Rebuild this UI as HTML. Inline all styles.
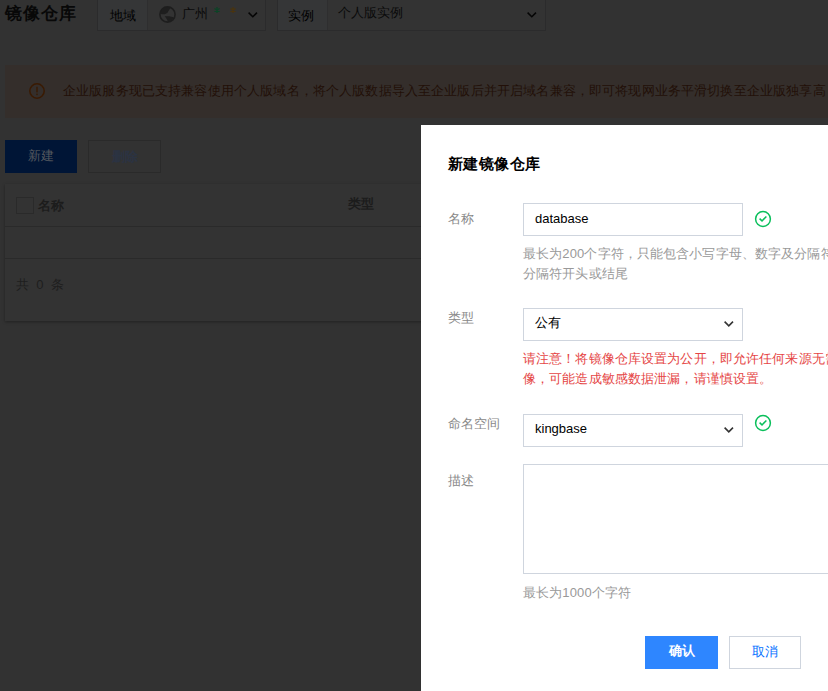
<!DOCTYPE html>
<html><head><meta charset="utf-8">
<style>
*{box-sizing:border-box;margin:0;padding:0}
html,body{width:828px;height:691px;overflow:hidden}
body{position:relative;background:#323232;font-family:"Liberation Sans",sans-serif;font-size:12px;color:#000}
.abs{position:absolute}
.nw{white-space:nowrap}
svg{position:absolute;overflow:visible}
/* page (dimmed) */
.title{left:5px;top:1.5px;font-size:17px;letter-spacing:1px;font-weight:bold;line-height:24px;color:#080808}
.filter{top:-2px;height:33px;border:1px solid #2b2b2c;background:#333333}
.filter .lab{position:absolute;left:0;top:0;bottom:0;width:50px;background:#353637;border-right:1px solid #2e2e2f;font-size:13px;line-height:34px;text-align:center;color:#000}
.banner{left:5px;top:65px;width:900px;height:53px;background:#342e2b}
.banner .txt{position:absolute;left:58px;top:17px;font-size:13px;letter-spacing:0.15px;line-height:18px;color:#221008}
.btn{top:140px;height:33px;width:72px;font-size:13px;line-height:31px;text-align:center}
.card{left:5px;top:184px;width:900px;height:137px;background:#333333;box-shadow:0 1px 3px rgba(0,0,0,.35)}
/* drawer */
.drawer{left:421px;top:125px;width:600px;height:700px;background:#fff}
.dtitle{left:448px;top:154px;letter-spacing:0.4px;font-size:15px;font-weight:bold;line-height:20px;color:#000}
.lbl{left:448px;font-size:13px;line-height:18px;color:#888}
.inp{left:523px;width:220px;height:33px;border:1px solid #cfd5de;background:#fff;font-size:13px;line-height:28px;padding-left:11px;color:#000}
.help{left:523px;font-size:13px;letter-spacing:0.12px;line-height:20px;color:#999}
.red{color:#e54545}
.btn2{height:33px;width:72px;font-size:13px;line-height:29px;text-align:center}
</style></head><body>

<div class="abs title nw">镜像仓库</div>

<div class="abs filter" style="left:97px;width:169px">
  <div class="lab">地域</div>
  <svg style="left:61px;top:7px" width="17" height="17" viewBox="0 0 17 17">
    <circle cx="8.5" cy="8.5" r="7.6" fill="none" stroke="#1e1e1e" stroke-width="1.6"/>
    <path d="M1.2 8 A7.4 7.4 0 0 1 11.5 1.7 L9.5 5 L8.3 7 L5.6 8.3 L3.5 8.2 Z" fill="#1e1e1e"/>
    <path d="M5.8 10.2 L10.2 10.2 L14.8 11.3 A7.4 7.4 0 0 1 9 15.9 L8 13.5 Z" fill="#1e1e1e"/>
  </svg>
  <div class="abs nw" style="left:84px;top:5px;font-size:13px;line-height:20px;color:#0a0a0a">广州</div>
  <svg style="left:116px;top:8px" width="6" height="6" viewBox="0 0 6 6"><path d="M3 0 V6 M0.4 1.5 L5.6 4.5 M0.4 4.5 L5.6 1.5" stroke="#0b4426" stroke-width="1.3"/></svg>
  <svg style="left:132px;top:8px" width="6" height="6" viewBox="0 0 6 6"><path d="M3 0 V6 M0.4 1.5 L5.6 4.5 M0.4 4.5 L5.6 1.5" stroke="#4a340e" stroke-width="1.3"/></svg>
  <svg style="left:149.5px;top:12.5px" width="10" height="6" viewBox="0 0 10 6"><polyline points="0.6,0.6 4.8,4.8 9,0.6" fill="none" stroke="#050505" stroke-width="1.5"/></svg>
</div>

<div class="abs filter" style="left:277px;width:269px">
  <div class="lab" style="text-indent:-3px">实例</div>
  <div class="abs nw" style="left:60px;top:4px;font-size:13px;line-height:20px;color:#0a0a0a">个人版实例</div>
  <svg style="left:249px;top:12.5px" width="10" height="6" viewBox="0 0 10 6"><polyline points="0.6,0.6 4.8,4.8 9,0.6" fill="none" stroke="#050505" stroke-width="1.5"/></svg>
</div>

<div class="abs banner">
  <svg style="left:24px;top:18px" width="16" height="16" viewBox="0 0 16 16">
    <circle cx="8" cy="8" r="7.2" fill="none" stroke="#3a1a02" stroke-width="1.5"/>
    <rect x="7.3" y="3.8" width="1.4" height="5.6" fill="#3a1a02"/>
    <rect x="7.3" y="10.6" width="1.4" height="1.5" fill="#3a1a02"/>
  </svg>
  <div class="txt nw">企业版服务现已支持兼容使用个人版域名，将个人版数据导入至企业版后并开启域名兼容，即可将现网业务平滑切换至企业版独享高</div>
</div>

<div class="abs btn" style="left:5px;background:#001536;color:#55595f">新建</div>
<div class="abs btn" style="left:88px;width:73px;border:1px solid #2a2a2a;color:#2b3342;font-weight:bold">删除</div>

<div class="abs card">
  <div class="abs" style="left:11px;top:13px;width:18px;height:17px;border:1px solid #2a2a2a"></div>
  <div class="abs nw" style="left:33px;top:12px;font-size:13px;font-weight:bold;line-height:20px;color:#1c1c1c">名称</div>
  <div class="abs nw" style="left:343px;top:10px;font-size:13px;font-weight:bold;line-height:20px;color:#1c1c1c">类型</div>
  <div class="abs" style="left:0;top:42px;width:100%;height:1px;background:#2a2a2a"></div>
  <div class="abs" style="left:0;top:74px;width:100%;height:1px;background:#2a2a2a"></div>
  <div class="abs nw" style="left:11px;top:92px;font-size:13px;line-height:18px;color:#1e1e1e;word-spacing:3.6px">共 0 条</div>
</div>

<div class="abs drawer"></div>
<div class="abs dtitle nw">新建镜像仓库</div>

<div class="abs lbl nw" style="top:210px">名称</div>
<div class="abs inp nw" style="top:203px;line-height:30px">database</div>
<svg style="left:755px;top:211px" width="16" height="16" viewBox="0 0 16 16"><circle cx="8" cy="8" r="7.4" fill="none" stroke="#0abf5b" stroke-width="1.5"/><polyline points="4.6,7.6 7,9.9 11.4,5.4" fill="none" stroke="#0abf5b" stroke-width="1.5"/></svg>
<div class="abs help nw" style="top:244px">最长为200个字符，只能包含小写字母、数字及分隔符("."、"_"、"-")，且不能以</div>
<div class="abs help nw" style="top:264px">分隔符开头或结尾</div>

<div class="abs lbl nw" style="top:309px">类型</div>
<div class="abs inp nw" style="top:308px">公有<svg style="left:200px;top:12px" width="10" height="6" viewBox="0 0 10 6"><polyline points="0.6,0.6 4.8,4.8 9,0.6" fill="none" stroke="#333" stroke-width="1.6"/></svg></div>
<div class="abs help red nw" style="top:349px">请注意！将镜像仓库设置为公开，即允许任何来源无需鉴权拉取镜</div>
<div class="abs help red nw" style="top:369px">像，可能造成敏感数据泄漏，请谨慎设置。</div>

<div class="abs lbl nw" style="top:415px">命名空间</div>
<div class="abs inp nw" style="top:414px">kingbase<svg style="left:200px;top:12px" width="10" height="6" viewBox="0 0 10 6"><polyline points="0.6,0.6 4.8,4.8 9,0.6" fill="none" stroke="#333" stroke-width="1.6"/></svg></div>
<svg style="left:755px;top:415px" width="16" height="16" viewBox="0 0 16 16"><circle cx="8" cy="8" r="7.4" fill="none" stroke="#0abf5b" stroke-width="1.5"/><polyline points="4.6,7.6 7,9.9 11.4,5.4" fill="none" stroke="#0abf5b" stroke-width="1.5"/></svg>

<div class="abs lbl nw" style="top:472px">描述</div>
<div class="abs inp" style="top:464px;height:110px;width:400px"></div>
<div class="abs help nw" style="top:583px">最长为1000个字符</div>

<div class="abs btn2" style="left:645px;top:636px;width:73px;background:#2e86ff;color:#fff;font-weight:bold">确认</div>
<div class="abs btn2" style="left:729px;top:636px;border:1px solid #cfd5de;color:#006eff;background:#fff">取消</div>

</body></html>
